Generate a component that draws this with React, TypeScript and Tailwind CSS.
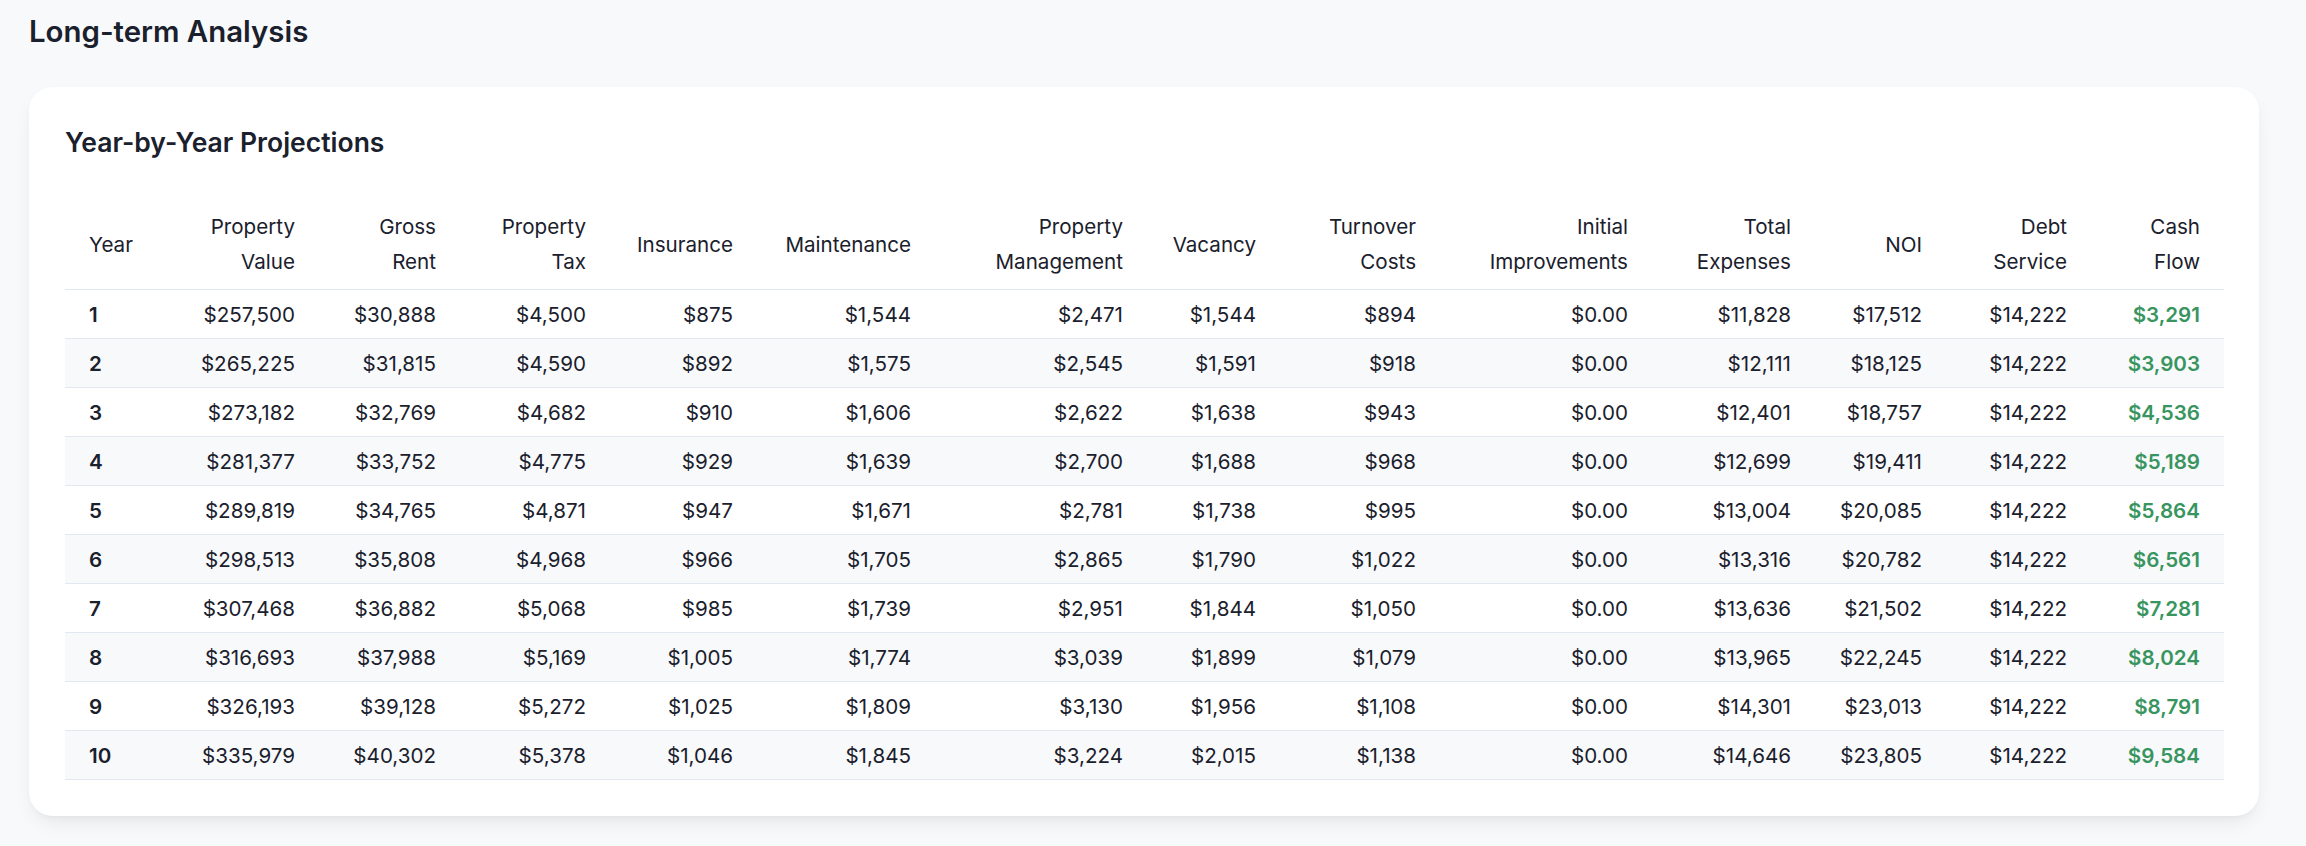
import React from "react";

const headers: { label: React.ReactNode; align: "left" | "right" }[] = [
  { label: "Year", align: "left" },
  { label: <>Property<br />Value</>, align: "right" },
  { label: <>Gross<br />Rent</>, align: "right" },
  { label: <>Property<br />Tax</>, align: "right" },
  { label: "Insurance", align: "right" },
  { label: "Maintenance", align: "right" },
  { label: <>Property<br />Management</>, align: "right" },
  { label: "Vacancy", align: "right" },
  { label: <>Turnover<br />Costs</>, align: "right" },
  { label: <>Initial<br />Improvements</>, align: "right" },
  { label: <>Total<br />Expenses</>, align: "right" },
  { label: "NOI", align: "right" },
  { label: <>Debt<br />Service</>, align: "right" },
  { label: <>Cash<br />Flow</>, align: "right" },
];

const widths = [110, 144, 141, 150, 147, 178, 212, 133, 160, 212, 163, 131, 145, 133];

const rows: string[][] = [
  ["1", "$257,500", "$30,888", "$4,500", "$875", "$1,544", "$2,471", "$1,544", "$894", "$0.00", "$11,828", "$17,512", "$14,222", "$3,291"],
  ["2", "$265,225", "$31,815", "$4,590", "$892", "$1,575", "$2,545", "$1,591", "$918", "$0.00", "$12,111", "$18,125", "$14,222", "$3,903"],
  ["3", "$273,182", "$32,769", "$4,682", "$910", "$1,606", "$2,622", "$1,638", "$943", "$0.00", "$12,401", "$18,757", "$14,222", "$4,536"],
  ["4", "$281,377", "$33,752", "$4,775", "$929", "$1,639", "$2,700", "$1,688", "$968", "$0.00", "$12,699", "$19,411", "$14,222", "$5,189"],
  ["5", "$289,819", "$34,765", "$4,871", "$947", "$1,671", "$2,781", "$1,738", "$995", "$0.00", "$13,004", "$20,085", "$14,222", "$5,864"],
  ["6", "$298,513", "$35,808", "$4,968", "$966", "$1,705", "$2,865", "$1,790", "$1,022", "$0.00", "$13,316", "$20,782", "$14,222", "$6,561"],
  ["7", "$307,468", "$36,882", "$5,068", "$985", "$1,739", "$2,951", "$1,844", "$1,050", "$0.00", "$13,636", "$21,502", "$14,222", "$7,281"],
  ["8", "$316,693", "$37,988", "$5,169", "$1,005", "$1,774", "$3,039", "$1,899", "$1,079", "$0.00", "$13,965", "$22,245", "$14,222", "$8,024"],
  ["9", "$326,193", "$39,128", "$5,272", "$1,025", "$1,809", "$3,130", "$1,956", "$1,108", "$0.00", "$14,301", "$23,013", "$14,222", "$8,791"],
  ["10", "$335,979", "$40,302", "$5,378", "$1,046", "$1,845", "$3,224", "$2,015", "$1,138", "$0.00", "$14,646", "$23,805", "$14,222", "$9,584"],
];

export default function App() {
  return (
    <div
      className="min-h-[846px] bg-[#F8F9FB] pl-[29px] pr-[47px] pt-[11px] text-[#1A202C]"
      style={{ fontFamily: "Inter, 'Noto Sans', sans-serif" }}
    >
      <h1 className="mb-[35px] text-[29.4px] font-semibold leading-[41px]">Long-term Analysis</h1>
      <div className="rounded-[24px] bg-white px-[36px] pb-[36px] pt-[35px] shadow-[0_10px_22px_-6px_rgba(0,0,0,0.09),0_4px_8px_-4px_rgba(0,0,0,0.05)]">
        <h2 className="mb-[36px] text-[26.5px] font-semibold leading-[41px]">Year-by-Year Projections</h2>
        <table className="w-full table-fixed border-collapse text-[20.6px]">
          <colgroup>
            {widths.map((w, i) => (
              <col key={i} style={{ width: w }} />
            ))}
          </colgroup>
          <thead>
            <tr>
              {headers.map((h, i) => (
                <th
                  key={i}
                  className={`whitespace-nowrap border-b border-[#E2E8F0] px-[24px] py-[10px] align-middle font-normal leading-[35px] text-[#1A202C] ${
                    h.align === "left" ? "text-left" : "text-right"
                  }`}
                >
                  {h.label}
                </th>
              ))}
            </tr>
          </thead>
          <tbody>
            {rows.map((r, ri) => (
              <tr key={ri} className={ri % 2 === 1 ? "bg-[#F8F9FB]" : "bg-white"}>
                {r.map((c, ci) => (
                  <td
                    key={ci}
                    className={`whitespace-nowrap border-b border-[#E2E8F0] px-[24px] pb-[9px] pt-[10px] leading-[29px] ${
                      ci === 0
                        ? "text-left font-semibold"
                        : ci === 13
                        ? "text-right font-semibold text-[#38955F]"
                        : "text-right font-normal"
                    }`}
                  >
                    {c}
                  </td>
                ))}
              </tr>
            ))}
          </tbody>
        </table>
      </div>
    </div>
  );
}
